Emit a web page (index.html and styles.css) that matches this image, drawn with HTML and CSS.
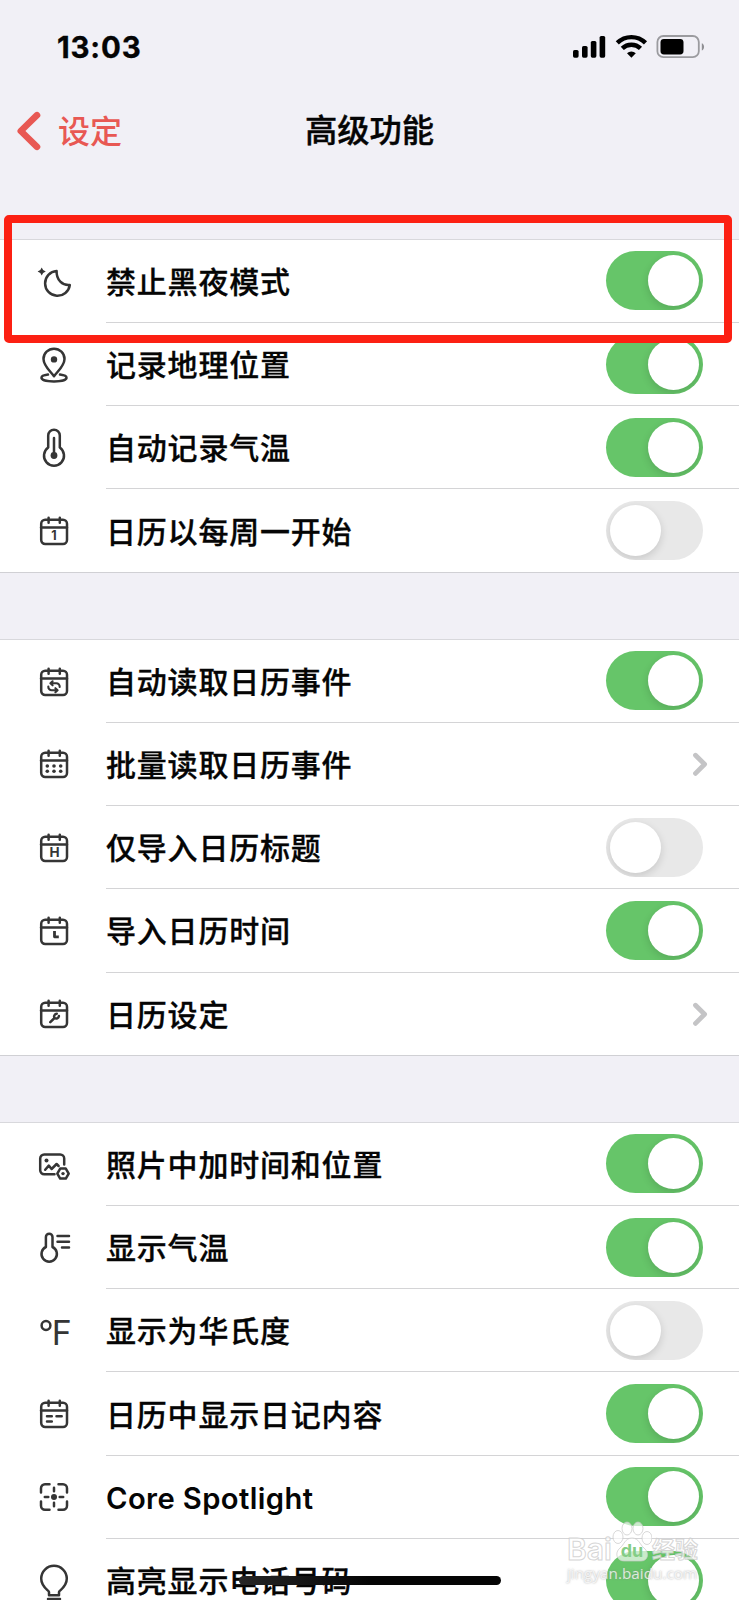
FILE: index.html
```html
<!DOCTYPE html>
<html lang="zh-CN">
<head>
  <meta charset="UTF-8" />
  <meta name="viewport" content="width=device-width, initial-scale=1.0" />
  <title>高级功能</title>
  <link rel="stylesheet" href="styles.css">
</head>
<body>
  <!-- shared shapes -->
  <svg class="defs" width="0" height="0">
    <symbol id="calendar" viewBox="0 0 36 36">
      <rect x="5.2" y="7.8" width="25.8" height="24.2" rx="4" />
      <path d="M5 15.4h26M12.6 5.8v5M23.8 5.8v5" />
    </symbol>
    <symbol id="chevron" viewBox="0 0 16 26">
      <path d="M3.5 4.2L12.6 13.3 3.5 22.4" />
    </symbol>
  </svg>

  <div class="screen">
    <header>
      <div class="status">
        <span class="time">13:03</span>
        <svg class="status-icons" width="134" height="26" viewBox="0 0 134 26">
          <rect x="1" y="16" width="5.6" height="7.7" rx="1.6" />
          <rect x="10" y="12" width="5.6" height="11.7" rx="1.6" />
          <rect x="18.8" y="7" width="5.6" height="16.7" rx="1.6" />
          <rect x="27.6" y="2" width="5.6" height="21.7" rx="1.6" />
          <path class="wave" d="M45.3 8.9a20 20 0 0 1 28.2 0M50.3 14.4a13 13 0 0 1 18.2 0" />
          <path d="M59.4 23.7l-4.4-4.5a6.4 6.4 0 0 1 8.8 0z" />
          <rect class="battery" x="85.4" y="2" width="41.4" height="21.2" rx="6" />
          <rect x="88.5" y="5" width="23" height="15.5" rx="3.4" />
          <path class="tip" d="M129.8 9.3c3 1 3 6.2 0 7.2z" />
        </svg>
      </div>
      <div class="navbar">
        <a class="back" href="#">
          <svg width="24" height="40" viewBox="0 0 24 40"><path d="M20 4.2L3.8 20 20 35.8" /></svg>
          <span>设定</span>
        </a>
        <h1>高级功能</h1>
      </div>
    </header>

    <main>
      <section class="group">
        <div class="row">
          <svg class="icon" viewBox="0 0 36 36">
            <path d="M20.6 8A12.4 12.4 0 1 0 33.8 22C26.5 22.8 20.3 17 20.6 8z" />
            <path class="fill" d="M5.7 4.4l1.4 2.7 2.7 1.4-2.7 1.4-1.4 2.7-1.4-2.7-2.7-1.4 2.7-1.4z" />
          </svg>
          <div class="cell"><span class="label">禁止黑夜模式</span><i class="switch on"></i></div>
        </div>
        <div class="row">
          <svg class="icon" viewBox="0 0 36 36">
            <path d="M18 30.2C14 25 7.5 19.5 7.5 12.9a10.5 10.2 0 0 1 21 0C28.5 19.5 22 25 18 30.2z" />
            <circle class="fill" cx="18" cy="13.4" r="3.2" />
            <path d="M12 28.6c-3.8.5-6.5 1.6-6.500 3.200 0 2.200 5.500 3.600 12.500 3.600s12.500-1.400 12.500-3.600c0-1.600-2.700-2.700-6.500-3.200" />
          </svg>
          <div class="cell"><span class="label">记录地理位置</span><i class="switch on"></i></div>
        </div>
        <div class="row">
          <svg class="icon" viewBox="0 0 36 36">
            <path d="M12.2 18.500V6.500a5.800 5.800 0 0 1 11.600 0v12a10 10 0 1 1-11.600 0z" />
            <path d="M18 9v17" />
            <circle class="fill" cx="18" cy="26.500" r="3.400" />
          </svg>
          <div class="cell"><span class="label">自动记录气温</span><i class="switch on"></i></div>
        </div>
        <div class="row">
          <svg class="icon" viewBox="0 0 36 36">
            <use href="#calendar" />
            <text x="18" y="28" font-size="12.500">1</text>
          </svg>
          <div class="cell"><span class="label">日历以每周一开始</span><i class="switch"></i></div>
        </div>
      </section>

      <section class="group">
        <div class="row">
          <svg class="icon" viewBox="0 0 36 36">
            <use href="#calendar" />
            <path class="sync" d="M14.500 20.300h5.500a3.400 3.400 0 0 1 3.700 3.700M16.600 18.300l-2.200 2 2.200 2M21.500 27.200H16a3.400 3.400 0 0 1-3.700-3.700M19.400 25.200l2.200 2-2.200 2" />
          </svg>
          <div class="cell"><span class="label">自动读取日历事件</span><i class="switch on"></i></div>
        </div>
        <div class="row">
          <svg class="icon" viewBox="0 0 36 36">
            <use href="#calendar" />
            <g class="fill">
              <circle cx="11.300" cy="21" r="1.800" /><circle cx="18" cy="21" r="1.800" /><circle cx="24.700" cy="21" r="1.800" />
              <circle cx="11.300" cy="26.300" r="1.800" /><circle cx="18" cy="26.300" r="1.800" /><circle cx="24.700" cy="26.300" r="1.800" />
            </g>
          </svg>
          <div class="cell"><span class="label">批量读取日历事件</span><svg class="more"><use href="#chevron" /></svg></div>
        </div>
        <div class="row">
          <svg class="icon" viewBox="0 0 36 36">
            <use href="#calendar" />
            <text x="18.500" y="28" font-size="13.500">H</text>
          </svg>
          <div class="cell"><span class="label">仅导入日历标题</span><i class="switch"></i></div>
        </div>
        <div class="row">
          <svg class="icon" viewBox="0 0 36 36">
            <use href="#calendar" />
            <path class="hands" d="M18.500 19v5.800h4.300" />
          </svg>
          <div class="cell"><span class="label">导入日历时间</span><i class="switch on"></i></div>
        </div>
        <div class="row">
          <svg class="icon" viewBox="0 0 36 36">
            <use href="#calendar" />
            <path d="M14.300 27.200l4.200-4.200M20.800 18.800a2.800 2.800 0 0 0-2.300 4.200 2.800 2.800 0 0 0 4.400-1.900" />
          </svg>
          <div class="cell"><span class="label">日历设定</span><svg class="more"><use href="#chevron" /></svg></div>
        </div>
      </section>

      <section class="group">
        <div class="row">
          <svg class="icon" viewBox="0 0 36 36">
            <path d="M18.500 28.300H8.200a4 4 0 0 1-4-4V12.400a4 4 0 0 1 4-4h16a4 4 0 0 1 4 4v6M9.200 23.800l3.600-4.200 2.800 3.400 5-5 2 2" />
            <circle class="fill" cx="10.500" cy="14.600" r="2" />
            <path d="M24.200 22.600h5.600l2.900 5-2.900 5h-5.600l-2.900-5z" />
            <circle class="fill" cx="27" cy="27.600" r="1.700" />
          </svg>
          <div class="cell"><span class="label">照片中加时间和位置</span><i class="switch on"></i></div>
        </div>
        <div class="row">
          <svg class="icon" viewBox="0 0 36 36">
            <path d="M9.900 18V8a3.300 3.300 0 0 1 6.600 0v10a7.700 7.700 0 1 1-6.600 0zM21.500 7h11.500M21.500 12.800h11.500M26 18.500h7" />
          </svg>
          <div class="cell"><span class="label">显示气温</span><i class="switch on"></i></div>
        </div>
        <div class="row">
          <svg class="icon" viewBox="0 0 36 36">
            <circle cx="10" cy="13.500" r="4.400" />
            <text class="unit" x="15.700" y="32.500" textLength="20" lengthAdjust="spacingAndGlyphs">F</text>
          </svg>
          <div class="cell"><span class="label">显示为华氏度</span><i class="switch"></i></div>
        </div>
        <div class="row">
          <svg class="icon" viewBox="0 0 36 36">
            <use href="#calendar" />
            <path d="M11 21.300h4.800M20.500 21.300h5.200M11 26.500h4.800" />
          </svg>
          <div class="cell"><span class="label">日历中显示日记内容</span><i class="switch on"></i></div>
        </div>
        <div class="row">
          <svg class="icon" viewBox="0 0 36 36">
            <path d="M5 14.500v-4.300a4 4 0 0 1 4-4h4.500M22.500 6.200h4.500a4 4 0 0 1 4 4v4.300M31 23.500v4.300a4 4 0 0 1-4 4h-4.500M13.500 31.800H9a4 4 0 0 1-4-4v-4.300" />
            <path d="M18 9.800v3.500M18 24.700v3.500M8.800 19h3.500M23.700 19h3.500" />
            <circle class="fill" cx="18" cy="19" r="3" />
          </svg>
          <div class="cell"><span class="label latin">Core Spotlight</span><i class="switch on"></i></div>
        </div>
        <div class="row">
          <svg class="icon" viewBox="0 0 36 36">
            <path d="M13 33.300v-3.300c0-1.500-7.800-4.700-7.800-13.400a12.800 12.800 0 0 1 25.600 0c0 8.700-7.800 11.900-7.800 13.400v3.300zM12 37h12" />
          </svg>
          <div class="cell"><span class="label">高亮显示电话号码</span><i class="switch on"></i></div>
        </div>
      </section>
    </main>

    <div class="highlight"></div>
    <div class="home-bar"></div>

    <div class="watermark">
      <div class="brand">
        <span class="bai">Bai</span>
        <svg class="paw" width="40" height="42" viewBox="0 0 40 42">
          <ellipse cx="6" cy="16" rx="5" ry="6.500" />
          <ellipse cx="15" cy="7.500" rx="5" ry="6.500" />
          <ellipse cx="26" cy="7.500" rx="5" ry="6.500" />
          <ellipse cx="35" cy="17" rx="5" ry="6.500" />
          <path d="M20 17c-7 0-8 7-12 10-6 5-3 13 4 13h17c7 0 9-8 3-13-4-3-5-10-12-10z" />
          <text x="20" y="36">du</text>
        </svg>
        <span class="jingyan">经验</span>
      </div>
      <div class="site">jingyan.baidu.com</div>
    </div>
  </div>
</body>
</html>
```
FILE: styles.css
```css
* {
  box-sizing: border-box;
}

body {
  margin: 0;
  background: #f1f0f6;
  color: #050505;
  font-family: Inter, "Noto Sans CJK SC", sans-serif;
}

.defs {
  position: absolute;
}

.screen {
  position: relative;
  width: 739px;
  height: 1600px;
  overflow: hidden;
}

header {
  height: 238.7px;
  background: #f1f0f6;
}

.status {
  display: flex;
  justify-content: space-between;
  align-items: center;
  height: 94px;
  padding: 0 33px 0 57px;
}

.time {
  font-size: 29.5px;
  font-weight: 700;
  letter-spacing: 0.8px;
  -webkit-text-stroke: 0.3px;
}

.status-icons .wave {
  fill: none;
  stroke: #000;
  stroke-width: 4.4;
}

.status-icons .battery {
  fill: none;
  stroke: #9b9b9f;
  stroke-width: 1.8;
}

.status-icons .tip {
  fill: #8f8f93;
}

.navbar {
  display: grid;
  grid-template-columns: 1fr auto 1fr;
  align-items: center;
  height: 74px;
  padding: 0 17px;
}

.back {
  display: flex;
  align-items: center;
  gap: 17px;
  color: #e85853;
  font-size: 32px;
  font-weight: 500;
  text-decoration: none;
}

.back span {
  padding-bottom: 5px;
}

.back svg {
  fill: none;
  stroke: #e85853;
  stroke-width: 6.6;
  stroke-linecap: round;
  stroke-linejoin: round;
}

h1 {
  margin: 0;
  padding-bottom: 6px;
  font-size: 32.3px;
  font-weight: 500;
  -webkit-text-stroke: 0.4px;
}

.group {
  margin-bottom: 65.9px;
  background: #fff;
  border-bottom: 1px solid #d0d0d4;
}

.row {
  display: flex;
  align-items: center;
  height: 83.25px;
  padding-left: 36px;
}

.row:first-child {
  border-top: 1px solid #d8d8dc;
}

.icon {
  width: 36px;
  height: 36px;
  margin-right: 34px;
  overflow: visible;
  fill: none;
  stroke: #353535;
  stroke-width: 2.5;
  stroke-linecap: round;
  stroke-linejoin: round;
}

.icon .fill {
  fill: #353535;
  stroke: none;
}

.icon .hands {
  stroke-width: 2.8;
  stroke-linecap: butt;
}

.icon .sync {
  stroke-width: 2.1;
}

.icon text {
  fill: #353535;
  stroke: none;
  font-weight: 700;
  text-anchor: middle;
}

.icon .unit {
  font-size: 33.5px;
  font-weight: 400;
  text-anchor: start;
}

.cell {
  flex: 1;
  display: flex;
  align-items: center;
  justify-content: space-between;
  height: 100%;
  padding-right: 36px;
  border-top: 1px solid #d4d4d6;
}

.row:first-child .cell {
  border-top: none;
}

.label {
  padding-top: 2px;
  font-size: 30px;
  font-weight: 500;
  letter-spacing: 0.8px;
  line-height: 44px;
  -webkit-text-stroke: 0.3px;
}

.latin {
  padding-top: 5px;
  font-size: 29.2px;
  font-weight: 600;
  letter-spacing: 0.4px;
  -webkit-text-stroke: 0;
}

.switch {
  width: 97px;
  height: 59px;
  padding: 4px;
  border-radius: 30px;
  background: #e8e8e8;
  overflow: hidden;
}

.switch::before {
  content: "";
  display: block;
  width: 51px;
  height: 51px;
  border-radius: 50%;
  background: #fff;
  box-shadow: 0 3px 9px rgba(0, 0, 0, 0.14);
}

.switch.on {
  background: #66c569;
}

.switch.on::before {
  margin-left: 38px;
}

.more {
  width: 16px;
  height: 26px;
  margin-right: -5px;
  fill: none;
  stroke: #c4c4c6;
  stroke-width: 4.8;
  stroke-linecap: round;
  stroke-linejoin: round;
}

/* overlays */
.highlight {
  position: absolute;
  left: 4px;
  top: 215px;
  width: 728px;
  height: 128px;
  border: 8px solid #fc2013;
  border-radius: 5px;
}

.home-bar {
  position: absolute;
  left: 239px;
  top: 1575.5px;
  width: 262px;
  height: 9.5px;
  border-radius: 5px;
  background: linear-gradient(90deg, #262626, #050505 50%);
}

.watermark {
  position: absolute;
  left: 567px;
  top: 1520px;
  width: 134px;
  color: rgba(255, 255, 255, 0.75);
}

.brand {
  display: flex;
  align-items: flex-end;
  height: 43px;
  -webkit-text-stroke: 1px rgba(200, 200, 200, 0.75);
}

.bai {
  width: 45px;
  font-size: 30px;
  line-height: 28px;
  font-weight: 600;
}

.paw {
  flex: none;
  fill: rgba(255, 255, 255, 0.65);
  stroke: rgba(200, 200, 200, 0.7);
}

.paw text {
  fill: #84cd86;
  stroke: none;
  -webkit-text-stroke: 0;
  font-size: 18px;
  font-weight: 700;
  text-anchor: middle;
}

.jingyan {
  font-size: 23px;
  line-height: 26px;
  font-weight: 700;
  white-space: nowrap;
}

.site {
  font-family: "Open Sans", sans-serif;
  font-size: 15.3px;
  line-height: 20px;
  text-shadow: 0 0 2px rgba(140, 140, 140, 0.75);
}
```
